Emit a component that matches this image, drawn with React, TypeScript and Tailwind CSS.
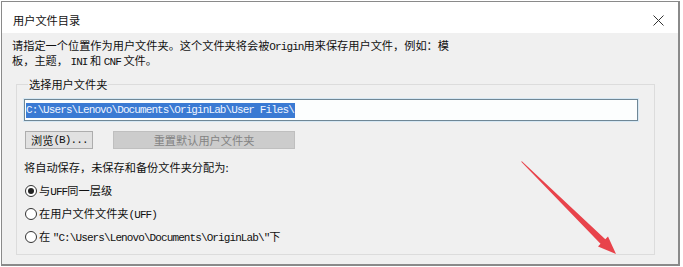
import React from "react";

const cjk = "font-['Noto_Sans_CJK_SC','Microsoft_YaHei',sans-serif]";

function M({ children }: { children: React.ReactNode }) {
  return (
    <span className="font-['Liberation_Mono','Noto_Sans_CJK_SC',monospace] text-[11px] tracking-[-0.9px] leading-none">
      {children}
    </span>
  );
}

function Radio({ checked, children }: { checked?: boolean; children: React.ReactNode }) {
  return (
    <div className="flex items-center h-[23px] gap-[2px]">
      <span className="w-[12px] h-[12px] rounded-full border border-[#333] bg-white flex items-center justify-center shrink-0">
        {checked && <span className="w-[6px] h-[6px] rounded-full bg-[#222]" />}
      </span>
      <span className="leading-[14px]">{children}</span>
    </div>
  );
}

export default function App() {
  return (
    <div className={`relative w-[683px] h-[267px] bg-white text-[11.2px] text-[#111] ${cjk}`}>
      <div className="ml-[1px] mt-[1px] w-[679px] h-[265px] border-l border-t border-r-2 border-b-2 border-[#8a8a8a] flex flex-col">
        {/* title bar */}
        <div className="h-[31px] bg-white flex items-start justify-between pl-[11px] pr-[14px] pt-[11px] shrink-0">
          <span className="leading-[14px]">用户文件目录</span>
          <svg width="11" height="11" viewBox="0 0 11 11" className="mt-[2px]">
            <path d="M0.5 0.5 L10.5 10.5 M10.5 0.5 L0.5 10.5" stroke="#333" strokeWidth="1" />
          </svg>
        </div>

        {/* body */}
        <div className="flex-1 bg-[#f0f0f0] pt-[5px]">
          <p className="pl-[10px] leading-[14px] h-[28px]">
            请指定一个位置作为用户文件夹。这个文件夹将会被<M>Origin</M>用来保存用户文件，例如：模
            <br />
            板，主题， <M>INI</M> 和 <M>CNF</M> 文件。
          </p>

          <fieldset className="ml-[14px] mt-[11px] w-[639px] h-[178px] border border-[#dcdcdc] px-[7px]">
            <legend className="ml-[4px] px-[1px] leading-[14px]">选择用户文件夹</legend>

            <div className="mt-[8px] w-[614px] h-[22px] border border-[#6f8796] bg-[#fcfefe] shadow-[0_0_0_1px_#d6e8f4] flex items-center pl-[1px]">
              <span className="bg-[#3a7ad3] text-[#eef4ff] h-[15px] leading-[15px] pr-[1px] flex items-center">
                <M>C:\Users\Lenovo\Documents\OriginLab\User Files\</M>
              </span>
            </div>

            <div className="mt-[10px] flex gap-[20px] pl-[1px]">
              <button
                type="button"
                className="w-[68px] h-[18px] bg-[#e1e1e1] border border-[#adadad] flex items-center pl-[5px] leading-[14px]"
              >
                浏览<M>(B)...</M>
              </button>
              <button
                type="button"
                disabled
                className="w-[182px] h-[18px] bg-[#cccccc] border border-[#bfbfbf] text-[#838383] flex items-center justify-center leading-[14px]"
              >
                重置默认用户文件夹
              </button>
            </div>

            <p className="mt-[11px] leading-[14px]">将自动保存，未保存和备份文件夹分配为:</p>

            <div className="mt-[5px] pl-[1px]">
              <Radio checked>
                与<M>UFF</M>同一层级
              </Radio>
              <Radio>
                在用户文件文件夹<M>(UFF)</M>
              </Radio>
              <Radio>
                在 <M>"C:\Users\Lenovo\Documents\OriginLab\"</M>下
              </Radio>
            </div>
          </fieldset>
        </div>
      </div>

      {/* red annotation arrow */}
      <svg className="absolute left-0 top-0 pointer-events-none" width="683" height="267" viewBox="0 0 683 267">
        <polygon
          points="521.2,160.8 600.5,242.8 598,245.5 616,253 608,235.5 605.3,238.2 521.9,160.2"
          fill="#e8434b"
        />
      </svg>
    </div>
  );
}
